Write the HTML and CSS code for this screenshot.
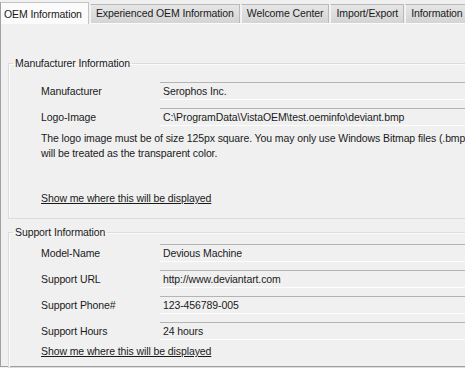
FILE: index.html
```html
<!DOCTYPE html>
<html>
  <head>
    <title>OEM Information</title>
    <meta name="viewport" content="width=device-width,initial-scale=1">
    <link rel="stylesheet" href="styles.css">
  </head>
  <body>
    <div class="window">
      <div class="tabs">
        <div class="tab tab-active">OEM Information</div>
        <div class="tab">Experienced OEM Information</div>
        <div class="tab">Welcome Center</div>
        <div class="tab">Import/Export</div>
        <div class="tab">Information</div>
      </div>
      <div class="panel">
        <fieldset class="group group-manufacturer">
          <legend>Manufacturer Information</legend>
          <div class="rows">
            <div class="label">Manufacturer</div>
            <div class="field">Serophos Inc.</div>
            <div class="label">Logo-Image</div>
            <div class="field">C:\ProgramData\VistaOEM\test.oeminfo\deviant.bmp</div>
          </div>
          <p class="note">
            The logo image must be of size 125px square. You may only use Windows Bitmap files (.bmp). The color of the upper left pixel<br>
            will be treated as the transparent color.
          </p>
          <a class="show-link" href="#">Show me where this will be displayed</a>
        </fieldset>
        <fieldset class="group group-support">
          <legend>Support Information</legend>
          <div class="rows">
            <div class="label">Model-Name</div>
            <div class="field">Devious Machine</div>
            <div class="label">Support URL</div>
            <div class="field">http://www.deviantart.com</div>
            <div class="label">Support Phone#</div>
            <div class="field">123-456789-005</div>
            <div class="label">Support Hours</div>
            <div class="field">24 hours</div>
          </div>
          <a class="show-link show-link-tight" href="#">Show me where this will be displayed</a>
        </fieldset>
      </div>
    </div>
  </body>
</html>
```

FILE: styles.css
```css
html, body {
  margin: 0;
  width: 465px;
  height: 368px;
  overflow: hidden;
  background-color: #f0f0f0;
  font-family: "Liberation Sans", Arial, sans-serif;
  font-size: 10.5px;
  letter-spacing: -0.1px;
  color: #1a1a1a;
}
.window {
  width: 640px;
}
.tabs {
  display: flex;
  align-items: flex-end;
  height: 23px;
}
.tab {
  box-sizing: border-box;
  height: 19px;
  line-height: 17px;
  padding: 0 5px;
  white-space: nowrap;
  background: linear-gradient(#e6e6e6, #d4d4d4);
  border: 1px solid #b9b9b9;
  border-bottom: none;
  border-left-color: #f4f4f4;
  margin-right: 1px;
}
.tab-active {
  height: 22px;
  line-height: 22px;
  padding: 0 6px 0 3px;
  background: #fbfbfb;
  border-color: #c4c4c4;
  border-left: 1px solid #a0a0a0;
  position: relative;
  top: 1px;
}
.panel {
  border-left: 1px solid #a0a0a0;
  border-bottom: 1px solid #a0a0a0;
  border-top: 1px solid #fbfbfb;
  height: 344px;
  box-sizing: border-box;
}
.group {
  margin: 0 0 0 7px;
  padding: 0 0 0 32px;
  border: 1px solid #dcdcdc;
  border-right: none;
  box-shadow: inset 1px 1px 0 #fbfbfb;
}
.group legend {
  margin-left: -28px;
  padding: 0 2px;
  line-height: 14px;
  color: #1a1a1a;
}
.group-manufacturer {
  margin-top: 32px;
  padding-top: 12px;
  padding-bottom: 12px;
}
.group-support {
  margin-top: 6px;
  padding-top: 5px;
  padding-bottom: 9px;
}
.rows {
  display: grid;
  grid-template-columns: 119px 1fr;
  grid-auto-rows: 18px;
  row-gap: 8px;
  align-items: center;
}
.field {
  box-sizing: border-box;
  height: 18px;
  line-height: 16px;
  padding-left: 3px;
  border-top: 1px solid #b4b4b4;
  border-bottom: 1px solid #fdfdfd;
  white-space: nowrap;
}
.note {
  margin: 5px 0 30px;
  line-height: 15px;
  white-space: nowrap;
}
.show-link {
  display: block;
  line-height: 15px;
  color: #1a1a1a;
  text-decoration: underline;
}
.show-link-tight {
  margin-top: 4px;
  line-height: 14px;
}
```
